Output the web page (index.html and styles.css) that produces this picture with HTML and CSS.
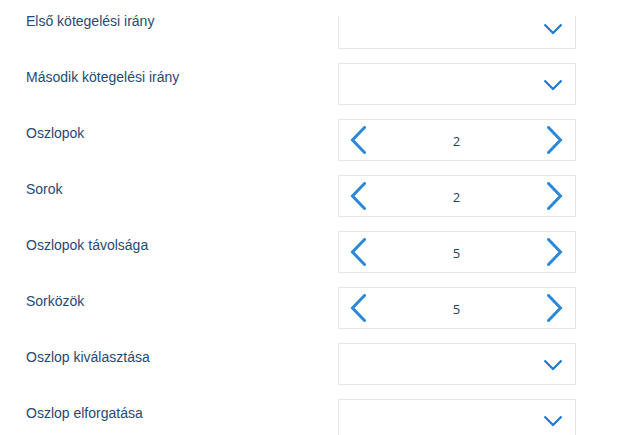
FILE: index.html
```html
<!DOCTYPE html>
<html lang="hu">
<head>
<meta charset="utf-8">
<link rel="stylesheet" href="styles.css">
</head>
<body>
<div class="form">
  <div class="row first">
    <div class="label">Első kötegelési irány</div>
    <div class="control select"><svg class="down" width="20" height="12" viewBox="0 0 20 12"><path d="M1.5 1.5 L10 10 L18.5 1.5" fill="none" stroke="currentColor" stroke-width="2.2"/></svg></div>
  </div>
  <div class="row">
    <div class="label">Második kötegelési irány</div>
    <div class="control select"><svg class="down" width="20" height="12" viewBox="0 0 20 12"><path d="M1.5 1.5 L10 10 L18.5 1.5" fill="none" stroke="currentColor" stroke-width="2.2"/></svg></div>
  </div>
  <div class="row">
    <div class="label">Oszlopok</div>
    <div class="control spin">
      <svg class="arrow" width="17" height="28" viewBox="0 0 17 28"><path d="M14.5 1.5 L2.5 14 L14.5 26.5" fill="none" stroke="currentColor" stroke-width="3" stroke-linecap="round"/></svg>
      <span class="value">2</span>
      <svg class="arrow" width="17" height="28" viewBox="0 0 17 28"><path d="M2.5 1.5 L14.5 14 L2.5 26.5" fill="none" stroke="currentColor" stroke-width="3" stroke-linecap="round"/></svg>
    </div>
  </div>
  <div class="row">
    <div class="label">Sorok</div>
    <div class="control spin">
      <svg class="arrow" width="17" height="28" viewBox="0 0 17 28"><path d="M14.5 1.5 L2.5 14 L14.5 26.5" fill="none" stroke="currentColor" stroke-width="3" stroke-linecap="round"/></svg>
      <span class="value">2</span>
      <svg class="arrow" width="17" height="28" viewBox="0 0 17 28"><path d="M2.5 1.5 L14.5 14 L2.5 26.5" fill="none" stroke="currentColor" stroke-width="3" stroke-linecap="round"/></svg>
    </div>
  </div>
  <div class="row">
    <div class="label">Oszlopok távolsága</div>
    <div class="control spin">
      <svg class="arrow" width="17" height="28" viewBox="0 0 17 28"><path d="M14.5 1.5 L2.5 14 L14.5 26.5" fill="none" stroke="currentColor" stroke-width="3" stroke-linecap="round"/></svg>
      <span class="value">5</span>
      <svg class="arrow" width="17" height="28" viewBox="0 0 17 28"><path d="M2.5 1.5 L14.5 14 L2.5 26.5" fill="none" stroke="currentColor" stroke-width="3" stroke-linecap="round"/></svg>
    </div>
  </div>
  <div class="row">
    <div class="label">Sorközök</div>
    <div class="control spin">
      <svg class="arrow" width="17" height="28" viewBox="0 0 17 28"><path d="M14.5 1.5 L2.5 14 L14.5 26.5" fill="none" stroke="currentColor" stroke-width="3" stroke-linecap="round"/></svg>
      <span class="value">5</span>
      <svg class="arrow" width="17" height="28" viewBox="0 0 17 28"><path d="M2.5 1.5 L14.5 14 L2.5 26.5" fill="none" stroke="currentColor" stroke-width="3" stroke-linecap="round"/></svg>
    </div>
  </div>
  <div class="row">
    <div class="label">Oszlop kiválasztása</div>
    <div class="control select"><svg class="down" width="20" height="12" viewBox="0 0 20 12"><path d="M1.5 1.5 L10 10 L18.5 1.5" fill="none" stroke="currentColor" stroke-width="2.2"/></svg></div>
  </div>
  <div class="row">
    <div class="label">Oszlop elforgatása</div>
    <div class="control select"><svg class="down" width="20" height="12" viewBox="0 0 20 12"><path d="M1.5 1.5 L10 10 L18.5 1.5" fill="none" stroke="currentColor" stroke-width="2.2"/></svg></div>
  </div>
</div>
</body>
</html>
```

FILE: styles.css
```css
html, body {
  margin: 0;
  padding: 0;
  background: #ffffff;
  overflow: hidden;
}
.form {
  padding: 7px 0 0 26px;
  display: flex;
  flex-direction: column;
  gap: 14px;
}
.row {
  display: grid;
  grid-template-columns: 312px 238px;
  height: 42px;
}
.label {
  font-family: "Liberation Sans", Arial, sans-serif;
  font-size: 14px;
  line-height: 16px;
  color: #1f4a73;
  padding-top: 6px;
}
.control {
  box-sizing: border-box;
  height: 42px;
  border: 1px solid #e6e6e6;
  background: #fff;
  display: flex;
  align-items: center;
}
.first .control {
  clip-path: inset(9px 0 0 0);
}
.select {
  justify-content: flex-end;
  padding-right: 12px;
}
.down {
  color: #1c78d4;
  margin-top: 2px;
}
.spin {
  justify-content: space-between;
  padding: 0 12px 0 11px;
}
.arrow {
  color: #2b88d8;
}
.value {
  font-family: "Open Sans", "Segoe UI", sans-serif;
  font-size: 13px;
  color: #1e3f5f;
  margin-top: 2px;
}
```
